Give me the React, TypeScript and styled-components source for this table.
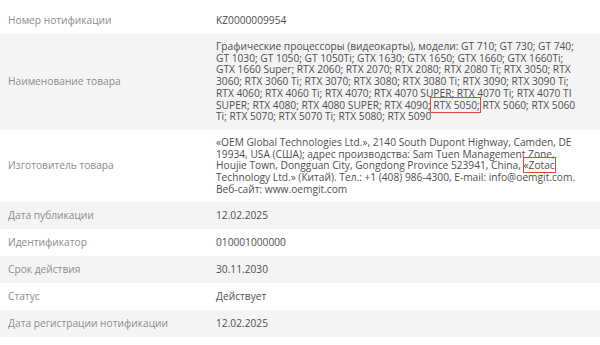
import { FC, ReactNode } from 'react';
import styled, { createGlobalStyle } from 'styled-components';

const GlobalStyle = createGlobalStyle`
    html, body {
        margin: 0;
        padding: 0;
        background: #ffffff;
    }

    body {
        font-family: 'Open Sans', 'Noto Sans', sans-serif;
        -webkit-font-smoothing: antialiased;
    }
`;

const Table = styled.section`
    display: flex;
    flex-direction: column;
    width: 600px;
    padding-top: 7px;
`;

const Row = styled.div<{ $shaded?: boolean }>`
    display: grid;
    grid-template-columns: 216px 1fr;
    align-items: center;
    min-height: 27px;
    padding: 7px 0;
    box-sizing: border-box;
    background-color: ${({ $shaded }) => ($shaded ? '#f4f4f4' : '#ffffff')};
`;

const Label = styled.div`
    padding-left: 8px;
    font-size: 10.2px;
    line-height: 11.7px;
    color: #8c8c8c;
`;

const Value = styled.div`
    padding-right: 16px;
    font-size: 10.2px;
    line-height: 11.7px;
    color: #4f4f4f;
`;

const Marked = styled.span`
    outline: 1.5px solid #e0492f;
    outline-offset: 0;
`;

interface Field {
    label: string;
    value: ReactNode;
}

const fields: Field[] = [
    { label: 'Номер нотификации', value: 'KZ0000009954' },
    {
        label: 'Наименование товара',
        value: (
            <>
                Графические процессоры (видеокарты), модели: GT 710; GT 730; GT 740; GT 1030; GT 1050; GT 1050Ti; GTX
                1630; GTX 1650; GTX 1660; GTX 1660Ti; GTX 1660 Super; RTX 2060; RTX 2070; RTX 2080; RTX 2080 Ti; RTX
                3050; RTX 3060; RTX 3060 Ti; RTX 3070; RTX 3080; RTX 3080 Ti; RTX 3090; RTX 3090 Ti; RTX 4060; RTX 4060
                Ti; RTX 4070; RTX 4070 SUPER; RTX 4070 Ti; RTX 4070 TI SUPER; RTX 4080; RTX 4080 SUPER; RTX 4090;
                <Marked> RTX 5050;</Marked> RTX 5060; RTX 5060 Ti; RTX 5070; RTX 5070 Ti; RTX 5080; RTX 5090
            </>
        ),
    },
    {
        label: 'Изготовитель товара',
        value: (
            <>
                «OEM Global Technologies Ltd.», 2140 South Dupont Highway, Camden, DE 19934, USA (США); адрес
                производства: Sam Tuen Management Zone, Houjie Town, Dongguan City, Gongdong Province 523941, China,{' '}
                <Marked>«Zotac </Marked>Technology Ltd.» (Китай). Тел.: +1 (408) 986-4300, E-mail: info@oemgit.com.
                Веб-сайт: www.oemgit.com
            </>
        ),
    },
    { label: 'Дата публикации', value: '12.02.2025' },
    { label: 'Идентификатор', value: '010001000000' },
    { label: 'Срок действия', value: '30.11.2030' },
    { label: 'Статус', value: 'Действует' },
    { label: 'Дата регистрации нотификации', value: '12.02.2025' },
];

const App: FC = () => (
    <>
        <GlobalStyle />
        <Table>
            {fields.map(({ label, value }, index) => (
                <Row key={label} $shaded={index % 2 === 1}>
                    <Label>{label}</Label>
                    <Value>{value}</Value>
                </Row>
            ))}
        </Table>
    </>
);

export default App;
